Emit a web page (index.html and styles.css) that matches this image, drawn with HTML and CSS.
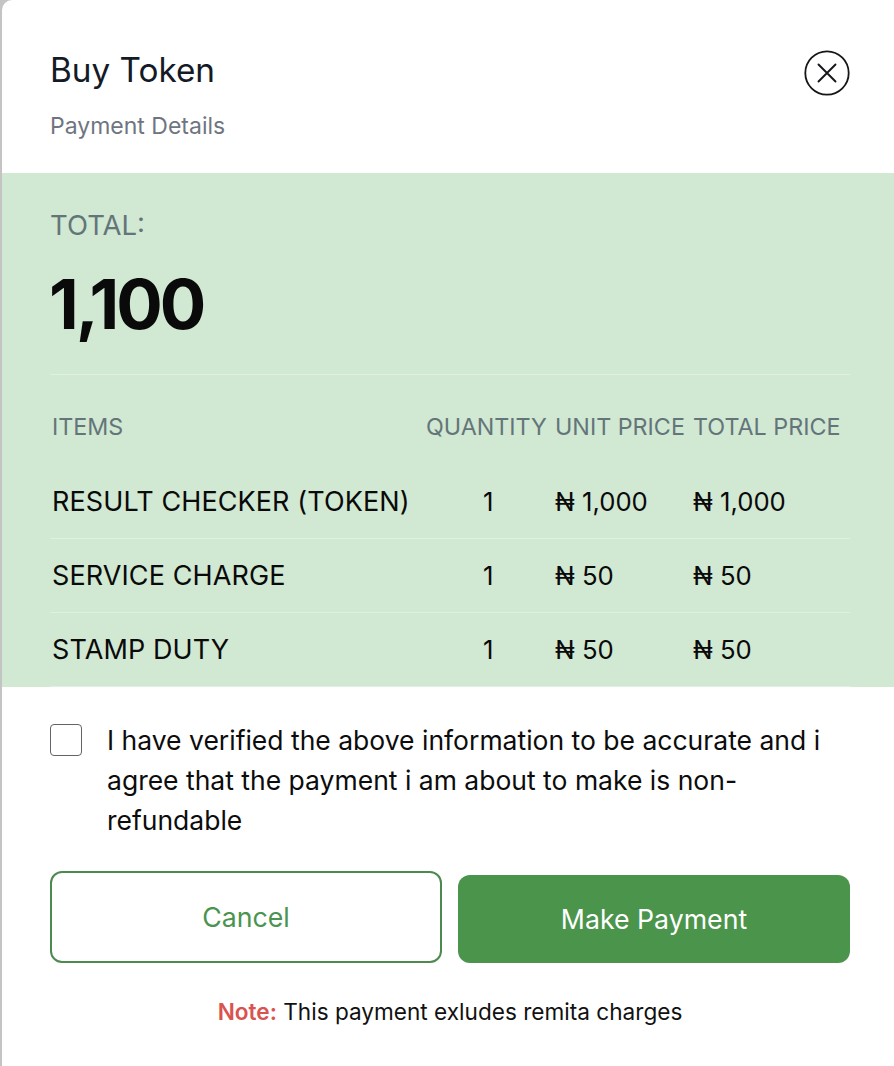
FILE: index.html
```html
<!DOCTYPE html>
<html lang="en">
<head>
    <meta charset="UTF-8">
    <meta name="viewport" content="width=device-width, initial-scale=1.0">
    <title>Buy Token</title>
    <link rel="stylesheet" href="styles.css">
</head>
<body>
    <div class="modal">
        <div class="modal-header">
            <div>
                <h1>Buy Token</h1>
                <p class="subtitle">Payment Details</p>
            </div>
            <button class="close" aria-label="Close">
                <svg width="46" height="46" viewBox="0 0 46 46" fill="none" stroke="#14161a">
                    <circle cx="23" cy="23" r="21.7" stroke-width="1.8"/>
                    <path d="M14.5 14.5L31.5 31.5M31.5 14.5L14.5 31.5" stroke-width="1.9" stroke-linecap="round"/>
                </svg>
            </button>
        </div>

        <div class="summary">
            <div class="total">
                <div class="total-label">TOTAL:</div>
                <div class="total-value">1,100</div>
            </div>
            <div class="row head">
                <div>ITEMS</div>
                <div>QUANTITY</div>
                <div>UNIT PRICE</div>
                <div>TOTAL PRICE</div>
            </div>
            <div class="row item">
                <div class="name">RESULT CHECKER (TOKEN)</div>
                <div class="qty">1</div>
                <div>₦ 1,000</div>
                <div>₦ 1,000</div>
            </div>
            <div class="row item">
                <div class="name">SERVICE CHARGE</div>
                <div class="qty">1</div>
                <div>₦ 50</div>
                <div>₦ 50</div>
            </div>
            <div class="row item">
                <div class="name">STAMP DUTY</div>
                <div class="qty">1</div>
                <div>₦ 50</div>
                <div>₦ 50</div>
            </div>
        </div>

        <div class="modal-footer">
            <label class="agree">
                <span class="checkbox"></span>
                <span>I have verified the above information to be accurate and i agree that the payment i am about to make is non-refundable</span>
            </label>
            <div class="actions">
                <button class="btn btn-outline">Cancel</button>
                <button class="btn btn-solid">Make Payment</button>
            </div>
            <p class="note"><strong>Note:</strong> This payment exludes remita charges</p>
        </div>
    </div>
</body>
</html>
```

FILE: styles.css
```css
* {
    box-sizing: border-box;
    margin: 0;
    padding: 0;
}

body {
    background: #c4c4c4;
    font-family: 'Inter', 'Liberation Sans', sans-serif;
    overflow: hidden;
}

.modal {
    margin-left: 2px;
    height: 1066px;
    background: #fff;
    border-top-left-radius: 10px;
}

.modal-header {
    display: flex;
    justify-content: space-between;
    height: 173px;
    padding: 49px 44px 0 48px;
}

h1 {
    font-size: 33.3px;
    line-height: 42px;
    font-weight: 400;
    color: #141a26;
}

.subtitle {
    margin-top: 22px;
    font-size: 23px;
    line-height: 26px;
    color: #6f7580;
}

.close {
    width: 46px;
    height: 46px;
    margin-top: 1px;
    border: none;
    background: none;
}

.summary {
    height: 514px;
    padding: 0 44px 0 48px;
    background: #d1e8d2;
}

.total {
    height: 202px;
    padding-top: 37px;
    border-bottom: 1px solid #e0efe0;
}

.total-label {
    font-size: 27.5px;
    line-height: 30px;
    color: #64757a;
}

.total-value {
    margin-top: 24px;
    margin-left: -1px;
    font-size: 69px;
    line-height: 80px;
    font-weight: 700;
    letter-spacing: -3px;
    color: #0a0a0a;
}

.row {
    display: grid;
    grid-template-columns: 374px 129px 138px 1fr;
    align-items: center;
    padding-left: 2px;
}

.head {
    height: 90px;
    padding-top: 12px;
    font-size: 23.3px;
    color: #64757a;
}

.item {
    height: 74px;
    font-size: 25.7px;
    color: #0a0a0a;
    border-bottom: 1px solid #e0efe0;
}

.name {
    font-size: 27px;
    letter-spacing: 0.1px;
}

.qty {
    padding-left: 57px;
}

.modal-footer {
    padding: 0 44px 0 48px;
}

.agree {
    display: flex;
    gap: 25px;
    padding-top: 33px;
    font-size: 26.5px;
    line-height: 40px;
    color: #0c0c0c;
}

.checkbox {
    flex: none;
    width: 32px;
    height: 32px;
    margin-top: 4px;
    border: 1.5px solid #606468;
    border-radius: 4px;
}

.actions {
    display: grid;
    grid-template-columns: 1fr 1fr;
    gap: 16px;
    margin-top: 31px;
}

.btn {
    height: 92px;
    border-radius: 12px;
    font-family: inherit;
    font-size: 26.7px;
}

.btn-outline {
    background: #fff;
    border: 2px solid #4c8a50;
    color: #4a9450;
}

.btn-solid {
    height: 88px;
    margin-top: 4px;
    background: #4a944b;
    border: none;
    color: #fff;
}

.note {
    margin-top: 34px;
    text-align: center;
    font-size: 22.6px;
    line-height: 30px;
    color: #111;
}

.note strong {
    color: #d9534f;
    font-weight: 600;
}
```
